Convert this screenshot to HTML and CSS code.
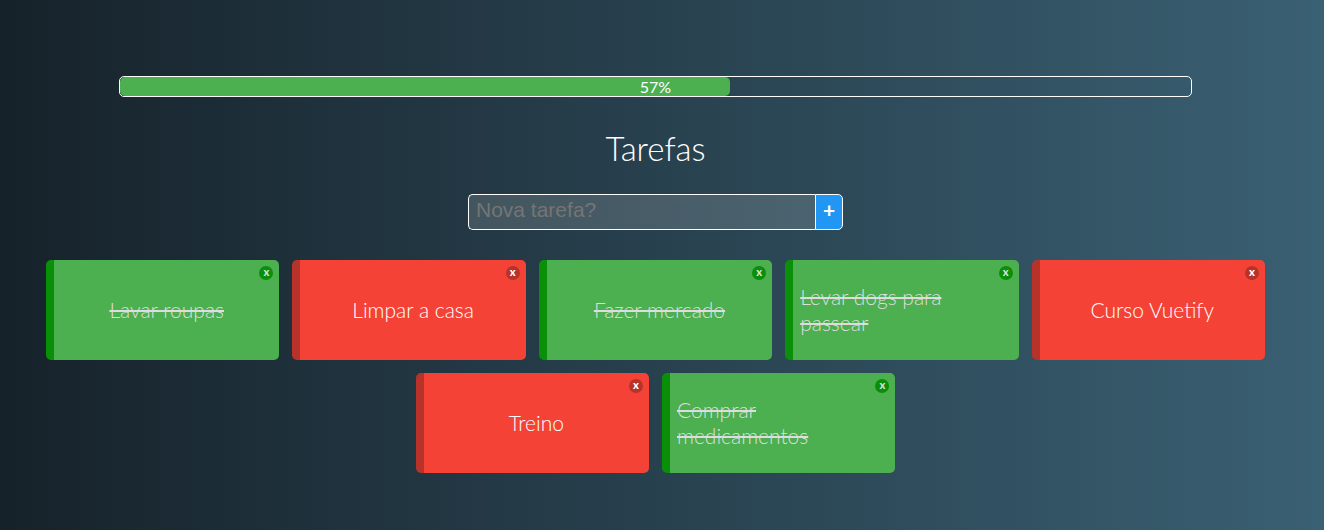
FILE: index.html
```html
<!DOCTYPE html>
<html lang="pt-BR">
<head>
<meta charset="utf-8">
<meta name="viewport" content="width=device-width, initial-scale=1">
<title>Tarefas</title>
<link rel="stylesheet" href="styles.css">
</head>
<body>
<main class="app">
  <div class="progress" role="progressbar" aria-label="Tarefas concluídas" aria-valuemin="0" aria-valuemax="100" aria-valuenow="57">
    <div class="progress-bar" style="width: 57%"></div>
    <span class="progress-value">57%</span>
  </div>
  <h1 class="title">Tarefas</h1>
  <form class="new-task">
    <input class="new-task-input" type="text" placeholder="Nova tarefa?" aria-label="Nova tarefa">
    <button class="new-task-add" type="button" aria-label="Adicionar tarefa">+</button>
  </form>
  <ul class="tasks">
    <li class="task done"><button class="task-close" type="button" aria-label="Remover Lavar roupas">x</button><p class="task-name">Lavar roupas</p></li>
    <li class="task pending"><button class="task-close" type="button" aria-label="Remover Limpar a casa">x</button><p class="task-name">Limpar a casa</p></li>
    <li class="task done"><button class="task-close" type="button" aria-label="Remover Fazer mercado">x</button><p class="task-name">Fazer mercado</p></li>
    <li class="task done"><button class="task-close" type="button" aria-label="Remover Levar dogs para passear">x</button><p class="task-name">Levar dogs para passear</p></li>
    <li class="task pending"><button class="task-close" type="button" aria-label="Remover Curso Vuetify">x</button><p class="task-name">Curso Vuetify</p></li>
    <li class="task pending"><button class="task-close" type="button" aria-label="Remover Treino">x</button><p class="task-name">Treino</p></li>
    <li class="task done"><button class="task-close" type="button" aria-label="Remover Comprar medicamentos">x</button><p class="task-name">Comprar medicamentos</p></li>
  </ul>
</main>
</body>
</html>
```
FILE: styles.css
```css
* {
  box-sizing: border-box;
}

body {
  margin: 0;
  min-height: 100vh;
  font-family: Lato, sans-serif;
  color: #fff;
  background: linear-gradient(to right, rgb(22, 34, 42), rgb(58, 96, 115));
}

.app {
  display: flex;
  flex-direction: column;
  align-items: center;
  padding: 76px 59px 57px 46px;
}

.progress {
  position: relative;
  width: 88%;
  height: 21px;
  border: 1px solid #fff;
  border-radius: 5px;
}

.progress-bar {
  height: 100%;
  border-radius: 5px;
  background: #4caf50;
}

.progress-value {
  position: absolute;
  inset: 0;
  display: flex;
  align-items: center;
  justify-content: center;
  font-size: 16px;
}

.title {
  margin: 32px 0 27px;
  font-size: 33px;
  line-height: 38px;
  font-weight: 300;
}

.new-task {
  display: flex;
  height: 36px;
}

.new-task-input {
  width: 347px;
  padding: 0 7px 5px;
  border: 1px solid #fff;
  border-right: 0;
  border-radius: 5px 0 0 5px;
  background: rgba(255, 255, 255, 0.15);
  color: #fff;
  font-family: "Liberation Sans", Arial, sans-serif;
  font-size: 21px;
}

.new-task-input::placeholder {
  color: #757575;
}

.new-task-add {
  width: 28px;
  padding: 0 0 6px;
  border: 1px solid #fff;
  border-radius: 0 5px 5px 0;
  background: #2196f3;
  color: #fff;
  font-family: Lato, sans-serif;
  font-size: 21px;
  font-weight: 700;
}

.tasks {
  display: flex;
  flex-wrap: wrap;
  justify-content: center;
  gap: 13px;
  width: 100%;
  margin: 30px 0 0;
  padding: 0;
  list-style: none;
}

.task {
  position: relative;
  display: flex;
  align-items: center;
  justify-content: center;
  flex: 0 0 calc((100% - 52px) / 5);
  min-width: 180px;
  min-height: 100px;
  padding: 7px;
  border-left: 8px solid;
  border-radius: 5px;
}

.done {
  border-color: #0a8f08;
  background: #4caf50;
  color: #ddd;
}

.done .task-name {
  text-decoration: line-through;
  text-decoration-thickness: 2px;
}

.pending {
  border-color: #b73229;
  background: #f44336;
}

.task-name {
  margin: 0;
  font-size: 21px;
  line-height: 26px;
  font-weight: 300;
}

.task-close {
  position: absolute;
  top: 6px;
  right: 6px;
  display: flex;
  align-items: center;
  justify-content: center;
  width: 14px;
  height: 14px;
  padding: 0 0 2px;
  border: 0;
  border-radius: 50%;
  color: inherit;
  font-family: Lato, sans-serif;
  font-size: 11px;
  line-height: 12px;
  font-weight: 900;
}

.done .task-close {
  background: #0a8f08;
}

.pending .task-close {
  background: #b73229;
}
```
